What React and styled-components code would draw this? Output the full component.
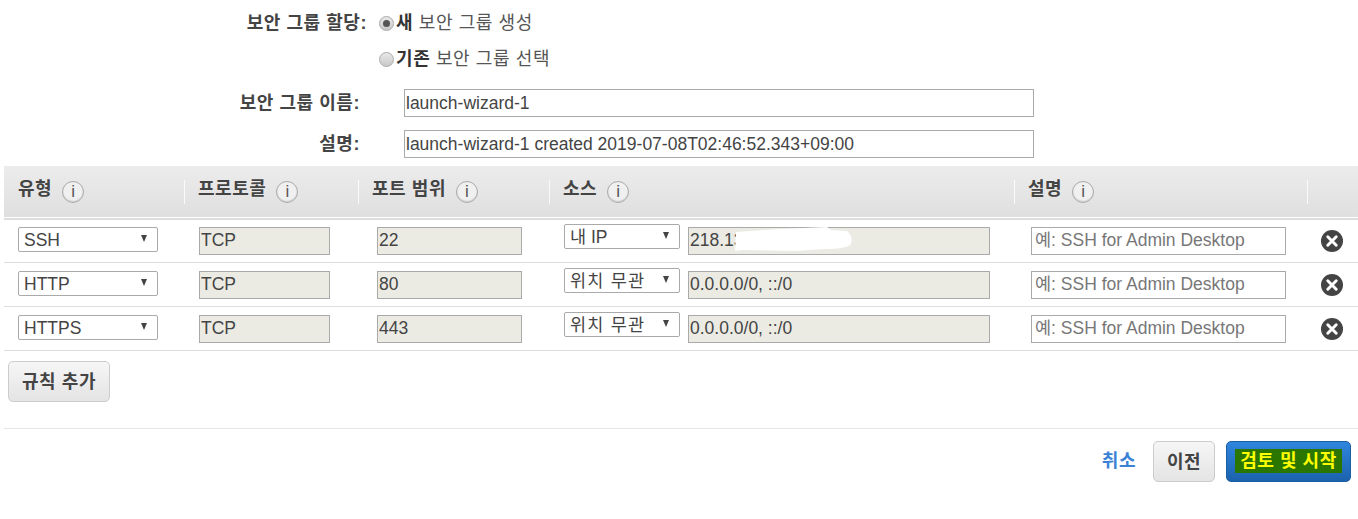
import styled, { createGlobalStyle } from "styled-components";

const GlobalStyle = createGlobalStyle`
  html, body {
    margin: 0;
    padding: 0;
    background: #fff;
  }
  body {
    width: 1358px;
    height: 519px;
    overflow: hidden;
    font-family: "Liberation Sans", "Noto Sans CJK KR", sans-serif;
    color: #444;
  }
`;

const Page = styled.div`
  display: flex;
  flex-direction: column;
  padding-left: 4px;
`;

const GroupForm = styled.div`
  display: grid;
  grid-template-columns: 363px 1fr;
  align-items: center;
  row-gap: 12px;
  padding-top: 11px;
`;

const FormLabel = styled.div`
  font-size: 18px;
  font-weight: 700;
  line-height: 24px;
  letter-spacing: 0.55px;
  text-align: right;
  color: #444;
  white-space: nowrap;
`;

const RadioRow = styled.label`
  display: flex;
  align-items: center;
  margin-left: 12px;
  height: 24px;
  font-size: 18px;
  line-height: 24px;
  letter-spacing: 0.6px;
  color: #555;
  white-space: nowrap;

  b {
    color: #333;
  }
`;

const RadioDot = styled.span`
  width: 13px;
  height: 13px;
  margin-right: 2px;
  border-radius: 50%;
  border: 1px solid #aaa;
  background: linear-gradient(#e8e8e8, #c9c9c9);
  display: flex;
  align-items: center;
  justify-content: center;

  &::after {
    content: "";
    display: ${(props) => (props.$checked ? "block" : "none")};
    width: 7px;
    height: 7px;
    border-radius: 50%;
    background: #555;
  }
`;

const TextRow = styled.div`
  display: grid;
  grid-template-columns: 356px 1fr;
  align-items: center;
  height: 28px;
  margin-top: ${(props) => props.$top}px;
`;

const Field = styled.input`
  box-sizing: border-box;
  display: block;
  width: ${(props) => props.$width}px;
  height: 28px;
  margin: 0;
  padding: 0 1px;
  border: 1px solid #aaa;
  border-radius: 0;
  outline: none;
  background: ${(props) => (props.readOnly ? "#ebebe4" : "#fff")};
  font-family: inherit;
  font-size: 17.5px;
  color: #444;

  &::placeholder {
    color: #777;
    opacity: 1;
  }
`;

const NameField = styled(Field)`
  margin-left: 44px;
`;

const DescField = styled(Field)`
  padding-left: 3px;
`;

const HeaderRow = styled.div`
  display: grid;
  grid-template-columns: 180px 174px 191px 465px 293px 51px;
  height: 51px;
  margin-top: 8px;
  background: linear-gradient(#ececec, #dfdfdf);
  border-bottom: 1px solid #fff;
  box-shadow: 0 2px 0 #ddd;
  align-items: center;
`;

const HeaderCell = styled.div`
  display: flex;
  align-items: center;
  height: 24px;
  gap: 10px;
  padding-left: 13px;
  border-left: 1px solid ${(props) => (props.$first ? "transparent" : "#fafafa")};
`;

const HeaderLabel = styled.span`
  align-self: flex-start;
  font-size: 18px;
  font-weight: 700;
  line-height: 18px;
  letter-spacing: 0.55px;
  color: #444;
  white-space: nowrap;
`;

const InfoBadge = styled.span`
  box-sizing: border-box;
  width: 22px;
  height: 22px;
  margin-top: 1px;
  border-radius: 50%;
  border: 1px solid #aaa;
  box-shadow: inset 0 -1px 1px #ccc;
  background: #f0f0f0;
  display: flex;
  align-items: center;
  justify-content: center;
  font-size: 17px;
  font-weight: 400;
  color: #555;
`;

const RuleRow = styled.div`
  display: grid;
  grid-template-columns: 180px 174px 191px 465px 293px 51px;
  height: 43px;
  margin-top: ${(props) => (props.$first ? 1 : 0)}px;
  border-bottom: 1px solid #ddd;
  align-items: center;
`;

const Cell = styled.div`
  display: flex;
  align-items: center;
  padding-left: ${(props) => props.$pad}px;
  gap: 8px;
`;

const SelectBox = styled.div`
  box-sizing: border-box;
  width: ${(props) => props.$width}px;
  height: 25px;
  margin-top: ${(props) => props.$shift}px;
  padding: 0 10px 0 5px;
  border: 1px solid #aaa;
  border-radius: 2px;
  background: #fff;
  display: flex;
  align-items: center;
  justify-content: space-between;
  font-size: 17.5px;
  line-height: 22px;
  color: #444;
  white-space: nowrap;
`;

const SelectText = styled.span`
  letter-spacing: ${(props) => (props.$wide ? 1.2 : 0)}px;
`;

const SelectArrow = styled.span`
  width: 0;
  height: 0;
  margin-top: -2px;
  border-left: 3.5px solid transparent;
  border-right: 3.5px solid transparent;
  border-top: 7px solid #444;
`;

const SourceWrap = styled.div`
  position: relative;
`;

const Scribble = styled.svg`
  position: absolute;
  left: 45px;
  top: -1px;
  width: 122px;
  height: 28px;
`;

const RemoveIcon = styled.svg`
  display: block;
  width: 22px;
  height: 22px;
`;

const AddArea = styled.div`
  box-sizing: border-box;
  height: 78px;
  padding-top: 10px;
  border-bottom: 1px solid #e6e6e6;
`;

const GrayButton = styled.button`
  box-sizing: border-box;
  height: 41px;
  width: ${(props) => props.$width}px;
  margin: 0;
  padding: 0 0 3px;
  border: 1px solid #ccc;
  border-radius: 5px;
  background: linear-gradient(#f6f6f6, #e4e4e4);
  font-family: inherit;
  font-size: 18px;
  font-weight: 700;
  letter-spacing: 0.55px;
  color: #444;
`;

const AddButton = styled(GrayButton)`
  margin-left: 4px;
`;

const Footer = styled.div`
  display: flex;
  align-items: center;
  justify-content: flex-end;
  padding: 12px 7px 0 0;
`;

const CancelLink = styled.a`
  margin: 0 17px 5px 0;
  font-size: 18px;
  font-weight: 700;
  letter-spacing: 0.55px;
  color: #3b82d6;
`;

const PrimaryButton = styled.button`
  box-sizing: border-box;
  width: 125px;
  height: 41px;
  margin: 0 0 0 11px;
  padding: 0 0 2px;
  border: 1px solid #1a5ea3;
  border-radius: 5px;
  background: linear-gradient(#2f86de, #1b62ad);
  font-family: inherit;
  font-size: 18px;
  font-weight: 700;
  letter-spacing: 0.55px;
`;

const Highlight = styled.span`
  display: inline-block;
  line-height: 24px;
  padding: 0 5px;
  background: #2a7600;
  color: #ffff00;
  white-space: nowrap;
`;

const rules = [
  { type: "SSH", port: "22", source: "내 IP", cidr: "218.13", hidden: true },
  { type: "HTTP", port: "80", source: "위치 무관", wide: true, cidr: "0.0.0.0/0, ::/0" },
  { type: "HTTPS", port: "443", source: "위치 무관", wide: true, cidr: "0.0.0.0/0, ::/0" },
];

const columns = ["유형", "프로토콜", "포트 범위", "소스", "설명"];

function Rule({ rule, first }) {
  return (
    <RuleRow $first={first}>
      <Cell $pad={14}>
        <SelectBox $width={140} $shift={-2}>
          {rule.type}
          <SelectArrow />
        </SelectBox>
      </Cell>
      <Cell $pad={15}>
        <Field $width={131} readOnly value="TCP" />
      </Cell>
      <Cell $pad={19}>
        <Field $width={145} readOnly value={rule.port} />
      </Cell>
      <Cell $pad={15}>
        <SelectBox $width={116} $shift={-8}>
          <SelectText $wide={rule.wide}>{rule.source}</SelectText>
          <SelectArrow />
        </SelectBox>
        <SourceWrap>
          <Field $width={302} readOnly value={rule.cidr} />
          {rule.hidden && (
            <Scribble viewBox="0 0 122 28">
              <path
                d="M3 6 L47 3 L94 1 L98 4 L114 5 Q120 10 118 18 Q114 23 92 23 L62 25 L10 24 L2 25 Z"
                fill="#fff"
              />
            </Scribble>
          )}
        </SourceWrap>
      </Cell>
      <Cell $pad={17}>
        <DescField $width={255} placeholder="예: SSH for Admin Desktop" />
      </Cell>
      <Cell $pad={14}>
        <RemoveIcon viewBox="0 0 22 22">
          <circle cx="11" cy="11" r="11" fill="#444" />
          <path
            d="M6.8 6.8 L15.2 15.2 M15.2 6.8 L6.8 15.2"
            stroke="#fff"
            strokeWidth="3"
            strokeLinecap="round"
          />
        </RemoveIcon>
      </Cell>
    </RuleRow>
  );
}

export default function App() {
  return (
    <Page>
      <GlobalStyle />
      <GroupForm>
        <FormLabel>보안 그룹 할당:</FormLabel>
        <RadioRow>
          <RadioDot $checked />
          <b>새</b>&nbsp;보안 그룹 생성
        </RadioRow>
        <span />
        <RadioRow>
          <RadioDot />
          <b>기존</b>&nbsp;보안 그룹 선택
        </RadioRow>
      </GroupForm>
      <TextRow $top={18}>
        <FormLabel>보안 그룹 이름:</FormLabel>
        <NameField $width={630} defaultValue="launch-wizard-1" />
      </TextRow>
      <TextRow $top={13}>
        <FormLabel>설명:</FormLabel>
        <NameField
          $width={630}
          defaultValue="launch-wizard-1 created 2019-07-08T02:46:52.343+09:00"
        />
      </TextRow>
      <HeaderRow>
        {columns.map((name, i) => (
          <HeaderCell key={name} $first={i === 0}>
            <HeaderLabel>{name}</HeaderLabel>
            <InfoBadge>i</InfoBadge>
          </HeaderCell>
        ))}
        <HeaderCell />
      </HeaderRow>
      {rules.map((rule, i) => (
        <Rule key={rule.type} rule={rule} first={i === 0} />
      ))}
      <AddArea>
        <AddButton $width={102}>규칙 추가</AddButton>
      </AddArea>
      <Footer>
        <CancelLink>취소</CancelLink>
        <GrayButton $width={62}>이전</GrayButton>
        <PrimaryButton>
          <Highlight>검토 및 시작</Highlight>
        </PrimaryButton>
      </Footer>
    </Page>
  );
}
